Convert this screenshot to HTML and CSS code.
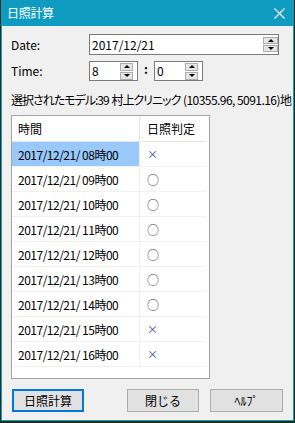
FILE: index.html
```html
<!DOCTYPE html>
<html lang="ja">
<head>
<meta charset="utf-8">
<title>日照計算</title>
<link rel="stylesheet" href="styles.css">
</head>
<body>
<div class="window">
  <div class="titlebar">
    <span class="title">日照計算</span>
    <svg class="close" width="11" height="11" viewBox="0 0 11 11"><path d="M0.5 0.5 L10.5 10.5 M10.5 0.5 L0.5 10.5" stroke="#fff" stroke-width="1.1" fill="none"/></svg>
  </div>
  <div class="content">
    <div class="form-row row-date">
      <span class="label">Date:</span>
      <div class="field field-date">
        <span class="value">2017/12/21</span>
        <div class="spin spin-date"><span class="up"></span><span class="down"></span></div>
      </div>
    </div>
    <div class="form-row row-time">
      <span class="label">Time:</span>
      <div class="field field-time">
        <span class="value">8</span>
        <div class="spin spin-time"><span class="up"></span><span class="down"></span></div>
      </div>
      <span class="colon">:</span>
      <div class="field field-time">
        <span class="value">0</span>
        <div class="spin spin-time"><span class="up"></span><span class="down"></span></div>
      </div>
    </div>
    <div class="info"><span class="info-jp">選択されたモデル:39</span> <span class="info-jp">村上クリニック</span> <span class="info-num">(10355.96, 5091.16)</span>地</div>
    <div class="list">
      <div class="list-head">
        <div class="cell c1">時間</div>
        <div class="cell c2">日照判定</div>
      </div>
      <div class="list-row selected"><div class="cell c1">2017/12/21/ 08時00</div><div class="cell c2"><span class="ng">×</span></div></div>
      <div class="list-row"><div class="cell c1">2017/12/21/ 09時00</div><div class="cell c2"><span class="ok">○</span></div></div>
      <div class="list-row"><div class="cell c1">2017/12/21/ 10時00</div><div class="cell c2"><span class="ok">○</span></div></div>
      <div class="list-row"><div class="cell c1">2017/12/21/ 11時00</div><div class="cell c2"><span class="ok">○</span></div></div>
      <div class="list-row"><div class="cell c1">2017/12/21/ 12時00</div><div class="cell c2"><span class="ok">○</span></div></div>
      <div class="list-row"><div class="cell c1">2017/12/21/ 13時00</div><div class="cell c2"><span class="ok">○</span></div></div>
      <div class="list-row"><div class="cell c1">2017/12/21/ 14時00</div><div class="cell c2"><span class="ok">○</span></div></div>
      <div class="list-row"><div class="cell c1">2017/12/21/ 15時00</div><div class="cell c2"><span class="ng">×</span></div></div>
      <div class="list-row"><div class="cell c1">2017/12/21/ 16時00</div><div class="cell c2"><span class="ng">×</span></div></div>
    </div>
    <div class="buttons">
      <div class="btn focused">日照計算</div>
      <div class="btn btn-close">閉じる</div>
      <div class="btn btn-help">ﾍﾙﾌﾟ</div>
    </div>
  </div>
</div>
</body>
</html>
```
FILE: styles.css
```css
html, body {
  margin: 0;
  padding: 0;
}
body {
  width: 295px;
  height: 423px;
  overflow: hidden;
  background: #1c2a1f;
  font-family: "Noto Sans CJK JP", "Noto Sans", sans-serif;
  font-size: 12px;
  color: #000;
}
.window {
  box-sizing: border-box;
  margin-left: 1px;
  width: 293px;
  height: 421px;
  background: #f0f0f0;
  border: 1px solid #119cc0;
  border-top: none;
  display: flex;
  flex-direction: column;
}
.titlebar {
  height: 26px;
  flex: none;
  background: #0f9cc0;
  color: #fff;
  display: flex;
  align-items: center;
  padding-left: 6px;
  padding-right: 9px;
  margin: 0 -1px;
}
.title {
  font-size: 12px;
  line-height: 14px;
  flex: 1;
  letter-spacing: -0.3px;
}
.close {
  display: block;
}
.content {
  padding: 8px 0 0 9px;
  display: flex;
  flex-direction: column;
}
.form-row {
  display: flex;
  align-items: center;
}
.label {
  width: 78px;
  flex: none;
  line-height: 14px;
}
.field {
  box-sizing: border-box;
  background: #fff;
  border: 1px solid #7a7a7a;
  display: flex;
  align-items: center;
  padding-left: 2px;
}
.value {
  flex: 1;
  line-height: 14px;
}
.row-date .field {
  width: 190px;
  height: 21px;
}
.row-time {
  margin-top: 6px;
}
.field-time {
  width: 49px;
  height: 20px;
}
.colon {
  width: 16px;
  text-align: center;
  font-weight: bold;
  line-height: 14px;
  margin-top: -5px;
}
.spin {
  display: flex;
  flex-direction: column;
  gap: 1px;
  flex: none;
}
.spin span {
  box-sizing: border-box;
  display: flex;
  align-items: center;
  justify-content: center;
  background: #e5e5e5;
  border: 1px solid #adadad;
}
.spin span::before {
  content: "";
  width: 0;
  height: 0;
  border-left: 3px solid transparent;
  border-right: 3px solid transparent;
}
.spin .up::before {
  border-bottom: 3px solid #000;
}
.spin .down::before {
  border-top: 3px solid #000;
}
.spin-date {
  width: 15px;
  margin-right: 0;
}
.spin-date span {
  height: 7px;
}
.spin-time {
  width: 13px;
  margin-right: 4px;
}
.spin-time span {
  height: 8px;
}
.info {
  margin-top: 12px;
  line-height: 14px;
  white-space: nowrap;
}
.info-jp {
  font-feature-settings: "palt";
  letter-spacing: -1px;
}
.info-num {
  letter-spacing: -0.55px;
}
.list {
  box-sizing: border-box;
  margin-top: 8px;
  width: 199px;
  height: 264px;
  background: #fff;
  border: 1px solid #a3a3a3;
  flex: none;
}
.list-head, .list-row {
  display: grid;
  grid-template-columns: 128px 66px;
}
.cell {
  padding-left: 6px;
  display: flex;
  align-items: center;
  white-space: nowrap;
}
.c1 {
  border-right: 1px solid #e5e5e5;
}
.list-row .c1 {
  letter-spacing: -0.5px;
}
.list-head .cell {
  height: 25px;
  border-bottom: 1px solid #e5e5e5;
}
.list-row .cell {
  height: 24px;
  border-bottom: 1px solid #f0f0f0;
}
.list-row .c1 {
  border-right-color: #f0f0f0;
}
.list-row.selected .c1 {
  background: #99c9fb;
}
.c2 {
  padding-left: 7px;
}
.ng {
  color: #2b4d9a;
  font-size: 11px;
}
.ok {
  color: #3a3a55;
  font-size: 12px;
}
.buttons {
  display: flex;
  margin-top: 10px;
  padding-left: 1px;
}
.btn {
  box-sizing: border-box;
  width: 72px;
  height: 23px;
  background: #e1e1e1;
  border: 1px solid #adadad;
  display: flex;
  align-items: center;
  justify-content: center;
  line-height: 14px;
}
.btn.focused {
  border: 2px solid #0078d7;
}
.btn-close {
  margin-left: 43px;
}
.btn-help {
  margin-left: 11px;
  width: 73px;
}
```
